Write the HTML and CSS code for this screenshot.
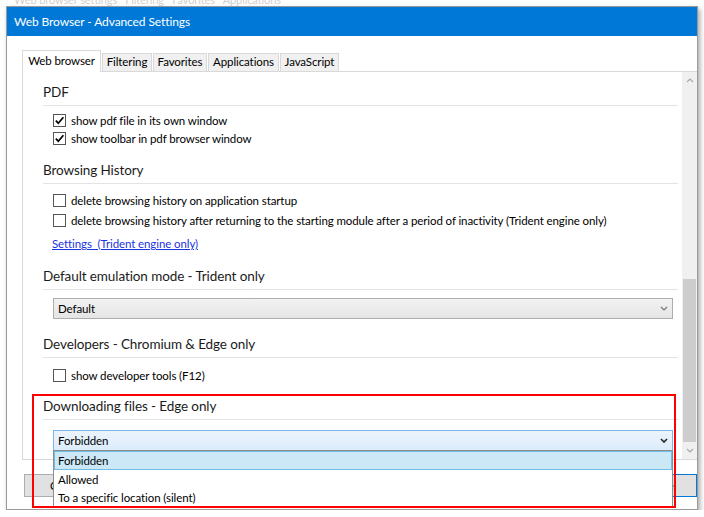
FILE: index.html
```html
<!DOCTYPE html>
<html lang="en">
<head>
    <meta charset="UTF-8">
    <title>Web Browser - Advanced Settings</title>
    <link rel="stylesheet" href="styles.css">
</head>
<body>
    <div class="behind">Web browser settings &nbsp; Filtering &nbsp; Favorites &nbsp; Applications</div>

    <div class="window">
        <div class="titlebar">Web Browser - Advanced Settings</div>

        <div class="dialog-body">
            <div class="tabs">
                <div class="tab active w-web">Web browser</div>
                <div class="tab w-filter">Filtering</div>
                <div class="tab w-fav">Favorites</div>
                <div class="tab w-apps">Applications</div>
                <div class="tab w-js">JavaScript</div>
            </div>

            <div class="panel">
                <div class="panel-content">
                    <div class="section first">
                        <div class="section-title">PDF</div>
                        <div class="options">
                            <div class="option"><span class="check checked"><svg width="11" height="11" viewBox="0 0 11 11"><path d="M1.8 5.6 L4.3 8.2 L9.4 2.2" fill="none" stroke="#000" stroke-width="1.7"/></svg></span>show pdf file in its own window</div>
                            <div class="option"><span class="check checked"><svg width="11" height="11" viewBox="0 0 11 11"><path d="M1.8 5.6 L4.3 8.2 L9.4 2.2" fill="none" stroke="#000" stroke-width="1.7"/></svg></span>show toolbar in pdf browser window</div>
                        </div>
                    </div>

                    <div class="section">
                        <div class="section-title">Browsing History</div>
                        <div class="options loose">
                            <div class="option"><span class="check"></span>delete browsing history on application startup</div>
                            <div class="option"><span class="check"></span>delete browsing history after returning to the starting module after a period of inactivity (Trident engine only)</div>
                        </div>
                        <a class="link" href="#">Settings&nbsp; (Trident engine only)</a>
                    </div>

                    <div class="section">
                        <div class="section-title">Default emulation mode - Trident only</div>
                        <div class="select">
                            <span>Default</span>
                            <svg width="8" height="5" viewBox="0 0 8 5"><path d="M1 1 L4 4 L7 1" fill="none" stroke="#777" stroke-width="1.2"/></svg>
                        </div>
                    </div>

                    <div class="section">
                        <div class="section-title">Developers - Chromium &amp; Edge only</div>
                        <div class="options spaced">
                            <div class="option"><span class="check"></span>show developer tools (F12)</div>
                        </div>
                    </div>

                    <div class="section downloads">
                        <div class="section-title">Downloading files - Edge only</div>
                        <div class="select open">
                            <span>Forbidden</span>
                            <svg width="8" height="5" viewBox="0 0 8 5"><path d="M1 1 L4 4 L7 1" fill="none" stroke="#222" stroke-width="1.6"/></svg>
                            <ul class="dropdown-list">
                                <li class="selected">Forbidden</li>
                                <li>Allowed</li>
                                <li class="last">To a specific location (silent)</li>
                            </ul>
                        </div>
                        <div class="highlight-box"></div>
                    </div>
                </div>

                <div class="scrollbar">
                    <div class="arrow"><svg width="8" height="5" viewBox="0 0 8 5"><path d="M1 4 L4 1 L7 4" fill="none" stroke="#a6a6a6" stroke-width="1.1"/></svg></div>
                    <div class="track"><div class="thumb"></div></div>
                    <div class="arrow"><svg width="8" height="5" viewBox="0 0 8 5"><path d="M1 1 L4 4 L7 1" fill="none" stroke="#a6a6a6" stroke-width="1.1"/></svg></div>
                </div>
            </div>

            <div class="buttons">
                <button class="btn btn-left">Copy</button>
                <button class="btn btn-default">Cancel</button>
            </div>
        </div>
    </div>
</body>
</html>
```

FILE: styles.css
```css
body {
    margin: 0;
    font-family: "Segoe UI", Lato, "Noto Sans", sans-serif;
    font-size: 11.5px;
    letter-spacing: -0.1px;
    color: #000;
    background: #fff;
}
.behind {
    height: 6px;
    overflow: hidden;
    padding-left: 14px;
    color: #d0d0d0;
    font-size: 11px;
    line-height: 0px;
}
.window {
    margin-left: 6px;
    width: 692px;
    height: 504px;
    box-sizing: border-box;
    border: 1px solid #9a9a9a;
    background: #fff;
    box-shadow: 2px 3px 5px rgba(0, 0, 0, 0.35);
}
.titlebar {
    height: 29px;
    line-height: 29px;
    padding-left: 7px;
    background: #0078d7;
    color: #fff;
    font-size: 12px;
}
.dialog-body {
    padding: 14px 0 0 15px;
}

/* tabs */
.tabs {
    display: flex;
    align-items: flex-end;
    height: 21px;
}
.tab {
    box-sizing: border-box;
    height: 18px;
    line-height: 16px;
    text-align: center;
    background: #f0f0f0;
    border: 1px solid #d9d9d9;
    border-bottom: none;
    margin-right: 1px;
}
.tab.active {
    height: 22px;
    line-height: 20px;
    background: #fff;
    margin-bottom: -1px;
    position: relative;
    z-index: 1;
}
.w-web { width: 79px; }
.w-filter { width: 50px; }
.w-fav { width: 54px; }
.w-apps { width: 71px; }
.w-js { width: 59px; }

/* panel */
.panel {
    display: flex;
    height: 389px;
    box-sizing: border-box;
    border: 1px solid #d9d9d9;
    border-right: none;
}
.panel-content {
    flex: 1;
    padding: 11px 4px 0 20px;
}
.section {
    padding-top: 14px;
}
.section.first {
    padding-top: 0;
}
.section.downloads {
    padding-top: 13px;
}
.section-title {
    font-size: 13.5px;
    line-height: 19px;
    padding-bottom: 3px;
    border-bottom: 1px solid #e3e3e3;
    color: #1b1b1b;
}
.options {
    margin-top: 5px;
    padding-left: 10px;
}
.options.loose {
    margin-top: 7px;
}
.options.spaced {
    margin-top: 8px;
}
.options.loose .option + .option {
    margin-top: 2px;
}
.option {
    display: flex;
    align-items: center;
    height: 18px;
    white-space: nowrap;
}
.check {
    width: 13px;
    height: 13px;
    box-sizing: border-box;
    border: 1px solid #555;
    background: #fff;
    margin-right: 5px;
    display: flex;
    align-items: center;
    justify-content: center;
}
.link {
    display: block;
    margin: 6px 0 0 9px;
    line-height: 18px;
    color: #1a33e0;
}

/* combo boxes */
.select {
    position: relative;
    display: flex;
    align-items: center;
    justify-content: space-between;
    height: 21px;
    box-sizing: border-box;
    margin: 8px 5px 2px 10px;
    padding: 0 4px 0 4px;
    border: 1px solid #adadad;
    background: linear-gradient(#f2f2f2, #e5e5e5);
}
.select.open {
    margin-top: 10px;
    border-color: #7eb4ea;
    border-bottom-color: #569de5;
    background: linear-gradient(#ecf4fc, #dcecfc);
}
.dropdown-list {
    position: absolute;
    top: 100%;
    left: -1px;
    right: -1px;
    margin: 0;
    padding: 0;
    list-style: none;
    background: #fff;
    border: 1px solid #8e8e8e;
    z-index: 10;
}
.dropdown-list li {
    height: 19px;
    line-height: 19px;
    padding-left: 4px;
    box-sizing: border-box;
}
.dropdown-list li.selected {
    background: #cce8f6;
    border: 1px solid #70bde6;
    line-height: 17px;
    padding-left: 3px;
}
.dropdown-list li.last {
    height: 17px;
    line-height: 17px;
}
.downloads {
    position: relative;
}
.highlight-box {
    position: absolute;
    top: 10px;
    left: -11px;
    width: 644px;
    height: 114px;
    box-sizing: border-box;
    border: 2px solid #f00;
    z-index: 11;
}

/* scrollbar */
.scrollbar {
    width: 15px;
    display: flex;
    flex-direction: column;
    background: #f0f0f0;
}
.arrow {
    height: 17px;
    display: flex;
    align-items: center;
    justify-content: center;
}
.track {
    flex: 1;
    display: flex;
    flex-direction: column;
    justify-content: flex-end;
}
.thumb {
    height: 163px;
    margin: 0 1px;
    background: #cdcdcd;
}

/* buttons */
.buttons {
    display: flex;
    justify-content: space-between;
    margin-top: 14px;
}
.btn {
    height: 23px;
    font: inherit;
    background: #e1e1e1;
    border: 1px solid #adadad;
    padding: 0;
    white-space: nowrap;
    overflow: hidden;
}
.btn-left {
    width: 88px;
    margin-left: 2px;
    text-align: left;
    padding-left: 25px;
}
.btn-default {
    width: 75px;
    border-color: #0078d7;
}
```
